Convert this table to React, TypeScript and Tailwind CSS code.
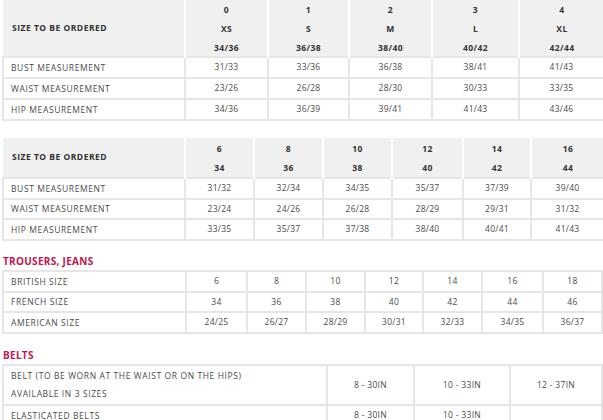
import { ReactNode } from 'react';

const font = { fontFamily: '"Open Sans", "Liberation Sans", sans-serif' };

interface SizeTableProps {
  widths: number[];
  header?: { label: string; lines: string[][]; height: number };
  rows: { label: ReactNode; cells: string[]; height: number }[];
}

function SizeTable({ widths, header, rows }: SizeTableProps) {
  return (
    <table className="ml-[2px] table-fixed border-collapse" style={{ width: widths.reduce((a, b) => a + b, 0) }}>
      <colgroup>
        {widths.map((w, i) => (
          <col key={i} style={{ width: w }} />
        ))}
      </colgroup>
      {header && (
        <thead>
          <tr style={{ height: header.height }}>
            <th className="bg-[#f0f0f0] border-r-2 border-white pl-[9px] text-left text-[8.5px] font-bold tracking-[0.5px] text-[#333]">
              {header.label}
            </th>
            {header.lines.map((col, i) => (
              <th key={i} className="bg-[#f0f0f0] border-r-2 border-white last:border-r-0 text-center text-[8.5px] font-bold tracking-[0.4px] text-[#333]">
                <div className="flex flex-col gap-[8px] leading-[11px]">
                  {col.map((t, j) => (
                    <span key={j}>{t}</span>
                  ))}
                </div>
              </th>
            ))}
          </tr>
        </thead>
      )}
      <tbody>
        {rows.map((row, i) => (
          <tr key={i} style={{ height: row.height }}>
            <td className="border-2 border-[#e6e6e6] pl-[7px] text-[8.5px] font-medium tracking-[0.6px] text-[#4a4a4a] leading-[18px]">{row.label}</td>
            {row.cells.map((c, j) => (
              <td key={j} className="border-2 border-[#e6e6e6] text-center text-[8.5px] font-medium tracking-[0.3px] text-[#4a4a4a]">
                {c}
              </td>
            ))}
          </tr>
        ))}
      </tbody>
    </table>
  );
}

export default function App() {
  return (
    <div className="w-[603px] h-[420px] overflow-hidden bg-white" style={font}>
      <SizeTable
        widths={[182, 83, 81, 83, 87, 85]}
        header={{
          label: 'SIZE TO BE ORDERED',
          height: 57,
          lines: [
            ['0', 'XS', '34/36'],
            ['1', 'S', '36/38'],
            ['2', 'M', '38/40'],
            ['3', 'L', '40/42'],
            ['4', 'XL', '42/44'],
          ],
        }}
        rows={[
          { label: 'BUST MEASUREMENT', cells: ['31/33', '33/36', '36/38', '38/41', '41/43'], height: 21 },
          { label: 'WAIST MEASUREMENT', cells: ['23/26', '26/28', '28/30', '30/33', '33/35'], height: 21 },
          { label: 'HIP MEASUREMENT', cells: ['34/36', '36/39', '39/41', '41/43', '43/46'], height: 21 },
        ]}
      />

      <div className="mt-[17px]">
        <SizeTable
          widths={[182, 69, 69, 69, 71, 68, 73]}
          header={{
            label: 'SIZE TO BE ORDERED',
            height: 40,
            lines: [
              ['6', '34'],
              ['8', '36'],
              ['10', '38'],
              ['12', '40'],
              ['14', '42'],
              ['16', '44'],
            ],
          }}
          rows={[
            { label: 'BUST MEASUREMENT', cells: ['31/32', '32/34', '34/35', '35/37', '37/39', '39/40'], height: 21 },
            { label: 'WAIST MEASUREMENT', cells: ['23/24', '24/26', '26/28', '28/29', '29/31', '31/32'], height: 20 },
            { label: 'HIP MEASUREMENT', cells: ['33/35', '35/37', '37/38', '38/40', '40/41', '41/43'], height: 21 },
          ]}
        />
      </div>

      <h2 className="mt-[14px] ml-[3px] h-[15px] text-[10px] font-bold tracking-[0.3px] text-[#c2144d] leading-[12px]">
        TROUSERS, JEANS
      </h2>
      <SizeTable
        widths={[183, 61, 59, 59, 58, 59, 61, 59]}
        rows={[
          { label: 'BRITISH SIZE', cells: ['6', '8', '10', '12', '14', '16', '18'], height: 21 },
          { label: 'FRENCH SIZE', cells: ['34', '36', '38', '40', '42', '44', '46'], height: 20 },
          { label: 'AMERICAN SIZE', cells: ['24/25', '26/27', '28/29', '30/31', '32/33', '34/35', '36/37'], height: 21 },
        ]}
      />

      <h2 className="mt-[15px] ml-[3px] h-[15px] text-[10px] font-bold tracking-[0.3px] text-[#c2144d] leading-[12px]">
        BELTS
      </h2>
      <SizeTable
        widths={[324, 87, 96, 92]}
        rows={[
          {
            label: (
              <div className="flex flex-col">
                <span>BELT (TO BE WORN AT THE WAIST OR ON THE HIPS)</span>
                <span>AVAILABLE IN 3 SIZES</span>
              </div>
            ),
            cells: ['8 - 30IN', '10 - 33IN', '12 - 37IN'],
            height: 40,
          },
          { label: 'ELASTICATED BELTS', cells: ['8 - 30IN', '10 - 33IN', ''], height: 21 },
        ]}
      />
    </div>
  );
}
